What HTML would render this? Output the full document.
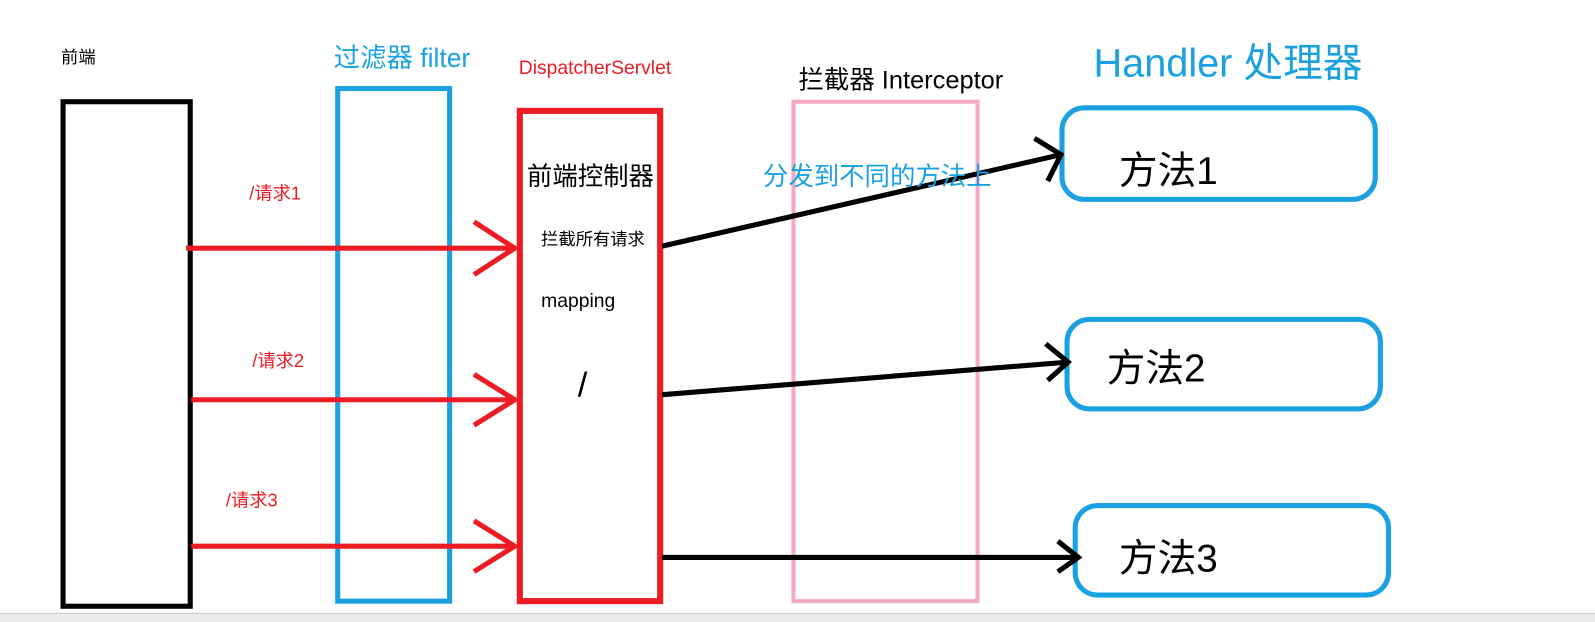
<!DOCTYPE html>
<html><head><meta charset="utf-8"><style>
body{margin:0;width:1595px;height:622px;background:#fff;overflow:hidden;position:relative;font-family:"Liberation Sans","Noto Sans CJK SC",sans-serif}
svg{position:absolute;left:0;top:0}
</style></head><body>
<svg width="1595" height="622" viewBox="0 0 1568 611.5" preserveAspectRatio="none" font-family="Liberation Sans, Noto Sans CJK SC, sans-serif">
<rect x="62" y="100" width="125" height="496" fill="none" stroke="#000" stroke-width="5"/>
<rect x="332" y="87" width="110" height="504" fill="none" stroke="#1ba1e2" stroke-width="5"/>
<rect x="511" y="109" width="138" height="482" fill="none" stroke="#ed1c24" stroke-width="6"/>
<rect x="780" y="100" width="181" height="491" fill="none" stroke="#f6a9c5" stroke-width="4"/>
<rect x="1044" y="106" width="308" height="90" rx="22" fill="none" stroke="#1ba1e2" stroke-width="5"/>
<rect x="1049" y="314" width="308" height="88" rx="22" fill="none" stroke="#1ba1e2" stroke-width="5"/>
<rect x="1057" y="497" width="308" height="88" rx="22" fill="none" stroke="#1ba1e2" stroke-width="5"/>
<g stroke="#ed1c24" stroke-width="5" fill="none">
<path d="M183 244H506M466 218L506 244L466 270"/>
<path d="M188 393H506M466 368L506 393L466 418"/>
<path d="M188 537H506M466 512L506 537L466 562"/>
</g>
<g stroke="#000" stroke-width="5" fill="none">
<path d="M651 242L1043 152M1017 136L1043 152L1030 178"/>
<path d="M651 388L1050 356M1028 338L1050 356L1030 374"/>
<path d="M651 548L1060 548M1040 532L1060 548L1040 562"/>
</g>
<text x="60" y="62" font-size="17">前端</text>
<text x="328" y="66" font-size="26" fill="#1ba1e2">过滤器 filter</text>
<text x="510" y="73" font-size="19" fill="#ed1c24">DispatcherServlet</text>
<text x="785" y="87" font-size="25">拦截器 Interceptor</text>
<text x="1075" y="75" font-size="39" fill="#1ba1e2">Handler 处理器</text>
<text x="518" y="182" font-size="25">前端控制器</text>
<text x="532" y="241" font-size="17">拦截所有请求</text>
<text x="532" y="302" font-size="19">mapping</text>
<text x="568" y="390" font-size="34">/</text>
<text x="750" y="182" font-size="25" fill="#1ba1e2">分发到不同的方法上</text>
<text x="1100" y="181" font-size="38">方法1</text>
<text x="1088" y="375" font-size="38">方法2</text>
<text x="1100" y="562" font-size="38">方法3</text>
<text x="245" y="196" font-size="18" fill="#ed1c24">/请求1</text>
<text x="248" y="361" font-size="18" fill="#ed1c24">/请求2</text>
<text x="222" y="498" font-size="18" fill="#ed1c24">/请求3</text>
<rect x="0" y="603" width="1568" height="9" fill="#ececec"/>
<line x1="0" y1="603" x2="1568" y2="603" stroke="#c8c8c8"/>
</svg>
</body></html>
